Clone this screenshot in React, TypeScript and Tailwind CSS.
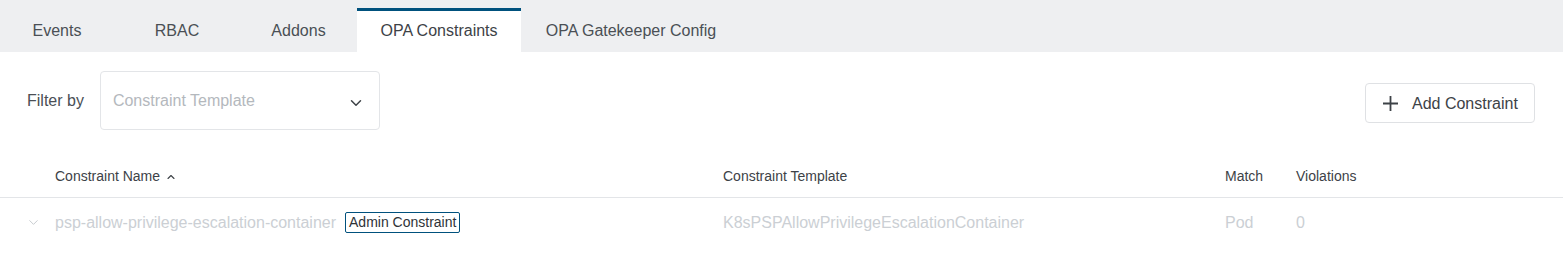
import { ChevronDown, ChevronUp } from 'lucide-react';

const TABS = [
  { label: 'Events', width: 'w-[114px]' },
  { label: 'RBAC', width: 'w-[126px]' },
  { label: 'Addons', width: 'w-[117px]' },
  { label: 'OPA Constraints', width: 'w-[164px]', active: true },
  { label: 'OPA Gatekeeper Config', width: 'w-[220px]' },
];

function Tabs() {
  return (
    <div className="flex h-[52px] items-end bg-[#eeeff1]">
      {TABS.map((t) => (
        <div
          key={t.label}
          className={
            t.active
              ? `${t.width} flex h-[44px] items-center justify-center border-t-[3px] border-[#00517d] bg-white pb-[1px] text-[16px] text-[#3d4247]`
              : `${t.width} flex h-[44px] items-center justify-center pt-[2px] text-[16px] text-[#4a4f55]`
          }
        >
          {t.label}
        </div>
      ))}
    </div>
  );
}

function PlusIcon() {
  return (
    <svg width="15" height="15" viewBox="0 0 15 15" className="shrink-0">
      <path d="M7.5 0v15M0 7.5h15" stroke="#3d4247" strokeWidth="1.8" fill="none" />
    </svg>
  );
}

function FilterBar() {
  return (
    <div className="flex items-start justify-between pl-[27px] pr-[28px] pt-[19px]">
      <div className="flex items-center gap-4">
        <span className="text-[16px] text-[#4a4f55]">Filter by</span>
        <div className="flex h-[59px] w-[280px] items-center justify-between rounded-[4px] border border-[#e3e5e8] pl-3 pr-[14px]">
          <span className="mt-[1px] text-[16px] text-[#b4b8bd]">Constraint Template</span>
          <ChevronDown size={18} strokeWidth={2} className="mt-[5px] text-[#3d4247]" />
        </div>
      </div>
      <button className="mt-[12px] flex h-[40px] w-[170px] items-center gap-[14px] rounded-[4px] border border-[#dfe1e4] bg-white pl-[17px] text-[16px] text-[#3d4247]">
        <PlusIcon />
        <span className="mt-[1px]">Add Constraint</span>
      </button>
    </div>
  );
}

function ConstraintTable() {
  return (
    <div className="mt-[20px]">
      <div className="grid h-[48px] grid-cols-[55px_668px_502px_71px_1fr] items-center border-b border-[#e3e5e8] pt-[6px] text-[14px] text-[#3d4247]">
        <div />
        <div className="flex items-center gap-[5px]">
          Constraint Name
          <ChevronUp size={12} strokeWidth={2.2} className="text-[#3d4247]" />
        </div>
        <div>Constraint Template</div>
        <div>Match</div>
        <div>Violations</div>
      </div>
      <div className="grid h-[47px] grid-cols-[55px_668px_502px_71px_1fr] items-center pt-[2px] text-[16px] text-[#cbcfd4]">
        <div className="flex justify-end pr-[14px]">
          <ChevronDown size={15} strokeWidth={1.5} className="text-[#c3c7cc]" />
        </div>
        <div className="flex items-center gap-[9px]">
          <span>psp-allow-privilege-escalation-container</span>
          <span className="flex h-[21px] items-center rounded-[2px] border border-[#00517d] px-[3px] text-[14px] text-[#2f3338]">
            Admin Constraint
          </span>
        </div>
        <div>K8sPSPAllowPrivilegeEscalationContainer</div>
        <div>Pod</div>
        <div>0</div>
      </div>
    </div>
  );
}

export default function App() {
  return (
    <div className="h-[260px] w-full bg-white font-['Liberation_Sans',Arial,sans-serif]">
      <Tabs />
      <FilterBar />
      <ConstraintTable />
    </div>
  );
}
